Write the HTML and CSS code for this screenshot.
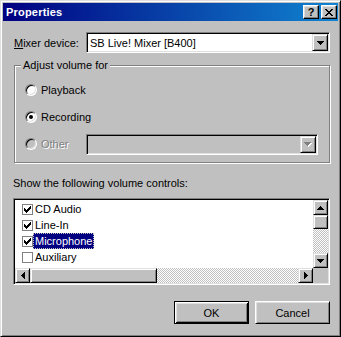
FILE: index.html
```html
<!DOCTYPE html>
<html lang="en">
<head>
    <meta charset="UTF-8">
    <title>Properties</title>
    <link rel="stylesheet" href="styles.css">
</head>
<body>
    <div class="window">
        <div class="titlebar">
            <span class="title">Properties</span>
            <div class="title-buttons">
                <button class="tbtn help">?</button>
                <button class="tbtn close">
                    <svg width="8" height="7" viewBox="0 0 8 7" shape-rendering="crispEdges"><path d="M0 0h2v1h1v1h2V1h1V0h2v1H7v1H6v1H5v1h1v1h1v1h1v1H6V6H5V5H3v1H2v1H0V6h1V5h1V4h1V3H2V2H1V1H0z" fill="#000"/></svg>
                </button>
            </div>
        </div>

        <div class="content">
            <div class="mixer-row">
                <label class="mixer-label"><u>M</u>ixer device:</label>
                <div class="combo mixer-combo">
                    <span class="combo-text">SB Live! Mixer [B400]</span>
                    <span class="combo-btn">
                        <svg width="7" height="4" viewBox="0 0 7 4" shape-rendering="crispEdges"><path d="M0 0h7v1H6v1H5v1H4v1H3V3H2V2H1V1H0z" fill="#000"/></svg>
                    </span>
                </div>
            </div>

            <div class="group">
                <span class="legend">Adjust volume for</span>
                <div class="radio-row">
                    <span class="radio"></span>
                    <span class="radio-label">Playback</span>
                </div>
                <div class="radio-row">
                    <span class="radio selected"></span>
                    <span class="radio-label">Recording</span>
                </div>
                <div class="radio-row disabled">
                    <span class="radio"></span>
                    <span class="radio-label">Other</span>
                    <div class="combo other-combo">
                        <span class="combo-text"></span>
                        <span class="combo-btn">
                            <svg width="8" height="5" viewBox="0 0 8 5" shape-rendering="crispEdges"><path d="M1 1h7v1H7v1H6v1H5v1H4V4H3V3H2V2H1z" fill="#fff"/><path d="M0 0h7v1H6v1H5v1H4v1H3V3H2V2H1V1H0z" fill="#808080"/></svg>
                        </span>
                    </div>
                </div>
            </div>

            <p class="list-caption">Show the following volume controls:</p>

            <div class="listbox">
                <div class="items">
                    <div class="item">
                        <span class="check"><svg width="7" height="7" viewBox="0 0 7 7" shape-rendering="crispEdges"><path d="M0 2h1v3H0zM1 3h1v3H1zM2 4h1v3H2zM3 3h1v3H3zM4 2h1v3H4zM5 1h1v3H5zM6 0h1v3H6z" fill="#000"/></svg></span>
                        <span class="item-text">CD Audio</span>
                    </div>
                    <div class="item">
                        <span class="check"><svg width="7" height="7" viewBox="0 0 7 7" shape-rendering="crispEdges"><path d="M0 2h1v3H0zM1 3h1v3H1zM2 4h1v3H2zM3 3h1v3H3zM4 2h1v3H4zM5 1h1v3H5zM6 0h1v3H6z" fill="#000"/></svg></span>
                        <span class="item-text">Line-In</span>
                    </div>
                    <div class="item">
                        <span class="check"><svg width="7" height="7" viewBox="0 0 7 7" shape-rendering="crispEdges"><path d="M0 2h1v3H0zM1 3h1v3H1zM2 4h1v3H2zM3 3h1v3H3zM4 2h1v3H4zM5 1h1v3H5zM6 0h1v3H6z" fill="#000"/></svg></span>
                        <span class="item-text selected">Microphone</span>
                    </div>
                    <div class="item">
                        <span class="check"></span>
                        <span class="item-text">Auxiliary</span>
                    </div>
                </div>

                <div class="vscroll">
                    <span class="sbtn">
                        <svg width="7" height="4" viewBox="0 0 7 4" shape-rendering="crispEdges"><path d="M3 0h1v1h1v1h1v1h1v1H0V3h1V2h1V1h1z" fill="#000"/></svg>
                    </span>
                    <span class="sbtn thumb-v"></span>
                    <span class="track"></span>
                    <span class="sbtn">
                        <svg width="7" height="4" viewBox="0 0 7 4" shape-rendering="crispEdges"><path d="M0 0h7v1H6v1H5v1H4v1H3V3H2V2H1V1H0z" fill="#000"/></svg>
                    </span>
                </div>

                <div class="hscroll">
                    <span class="sbtn">
                        <svg width="4" height="7" viewBox="0 0 4 7" shape-rendering="crispEdges"><path d="M3 0h1v7H3V6H2V5H1V4H0V3h1V2h1V1h1z" fill="#000"/></svg>
                    </span>
                    <span class="sbtn thumb-h"></span>
                    <span class="track"></span>
                    <span class="sbtn">
                        <svg width="4" height="7" viewBox="0 0 4 7" shape-rendering="crispEdges"><path d="M0 0h1v1h1v1h1v1h1v1H3v1H2v1H1v1H0z" fill="#000"/></svg>
                    </span>
                </div>

                <div class="corner"></div>
            </div>

            <div class="actions">
                <button class="btn default">OK</button>
                <button class="btn">Cancel</button>
            </div>
        </div>
    </div>
</body>
</html>
```

FILE: styles.css
```css
* {
    box-sizing: border-box;
}
body {
    margin: 0;
    background-color: #c0c0c0;
    font-family: 'Liberation Sans', Arial, sans-serif;
    font-size: 11px;
    color: #000;
}
.window {
    width: 341px;
    height: 337px;
    background-color: #c0c0c0;
    border: 1px solid;
    border-color: #dfdfdf #000 #000 #dfdfdf;
    box-shadow: inset 1px 1px #fff, inset -1px -1px #808080;
    padding: 2px;
    display: flex;
    flex-direction: column;
}
.titlebar {
    height: 18px;
    background: linear-gradient(90deg, #000080, #1084d0);
    display: flex;
    align-items: center;
    justify-content: space-between;
    padding: 0 1px 0 3px;
}
.title {
    color: #fff;
    font-weight: bold;
    font-size: 11px;
    letter-spacing: 0.2px;
}
.title-buttons {
    display: flex;
    gap: 2px;
}
.tbtn {
    width: 16px;
    height: 14px;
    padding: 0;
    margin: 0;
    background-color: #c0c0c0;
    border: 1px solid;
    border-color: #fff #000 #000 #fff;
    box-shadow: inset -1px -1px #808080, inset 1px 1px #dfdfdf;
    display: flex;
    align-items: center;
    justify-content: center;
    font-family: 'Liberation Sans', Arial, sans-serif;
    font-weight: bold;
    font-size: 11px;
    line-height: 12px;
    color: #000;
}
.content {
    flex: 1;
    padding: 11px 8px 0 10px;
    display: flex;
    flex-direction: column;
}
.mixer-row {
    display: flex;
    align-items: center;
    height: 21px;
}
.mixer-label {
    margin-left: 1px;
}
.combo {
    height: 21px;
    background-color: #fff;
    border: 1px solid;
    border-color: #808080 #fff #fff #808080;
    box-shadow: inset 1px 1px #000, inset -1px -1px #dfdfdf;
    padding: 1px;
    display: flex;
    align-items: stretch;
}
.mixer-combo {
    width: 244px;
    margin-left: auto;
}
.combo-text {
    flex: 1;
    padding-left: 2px;
    display: flex;
    align-items: center;
}
.combo-btn,
.sbtn {
    width: 16px;
    background-color: #c0c0c0;
    border: 1px solid;
    border-color: #dfdfdf #000 #000 #dfdfdf;
    box-shadow: inset 1px 1px #fff, inset -1px -1px #808080;
    display: flex;
    align-items: center;
    justify-content: center;
}
.group {
    position: relative;
    margin: 12px 0 0 1px;
    height: 98px;
    border: 1px solid #808080;
    box-shadow: inset 1px 1px #fff, 1px 1px #fff;
    padding: 14px 11px 0 10px;
    display: flex;
    flex-direction: column;
    gap: 7px;
}
.legend {
    position: absolute;
    top: -7px;
    left: 6px;
    padding: 0 2px;
    line-height: 13px;
    background-color: #c0c0c0;
}
.radio-row {
    height: 20px;
    display: flex;
    align-items: center;
}
.radio {
    position: relative;
    width: 12px;
    height: 12px;
    border-radius: 50%;
    border: 1px solid;
    border-color: #808080 #fff #fff #808080;
    box-shadow: inset 1px 1px #000, inset -1px -1px #dfdfdf;
    background-color: #fff;
}
.radio.selected::after {
    content: "";
    position: absolute;
    left: 3px;
    top: 3px;
    width: 4px;
    height: 4px;
    border-radius: 50%;
    background-color: #000;
}
.radio-label {
    margin-left: 4px;
}
.disabled .radio {
    background-color: #c0c0c0;
}
.disabled .radio-label {
    color: #808080;
    text-shadow: 1px 1px #fff;
}
.other-combo {
    width: 232px;
    margin-left: auto;
    background-color: #c0c0c0;
}
.list-caption {
    margin: 14px 0 0 0;
    line-height: 13px;
}
.listbox {
    margin-top: 8px;
    height: 87px;
    background-color: #fff;
    border: 1px solid;
    border-color: #808080 #fff #fff #808080;
    box-shadow: inset 1px 1px #000, inset -1px -1px #dfdfdf;
    padding: 1px;
    display: grid;
    grid-template-columns: 1fr 15px;
    grid-template-rows: 1fr 15px;
}
.items {
    padding-top: 1px;
    overflow: hidden;
}
.item {
    height: 16px;
    display: flex;
    align-items: center;
    padding-left: 7px;
}
.check {
    width: 11px;
    height: 11px;
    border: 1px solid #808080;
    background-color: #fff;
    display: flex;
    align-items: center;
    justify-content: center;
}
.item-text {
    height: 16px;
    line-height: 16px;
    padding: 0 2px;
}
.item-text.selected {
    background-color: #000080;
    color: #fff;
    outline: 1px dotted #c0c0c0;
    outline-offset: -1px;
}
.vscroll {
    display: flex;
    flex-direction: column;
}
.vscroll .sbtn {
    width: 15px;
    height: 15px;
}
.vscroll .thumb-v {
    height: 14px;
}
.hscroll {
    display: flex;
}
.hscroll .sbtn {
    width: 15px;
    height: 15px;
}
.hscroll .thumb-h {
    width: 127px;
}
.track {
    flex: 1;
    background: repeating-conic-gradient(#c0c0c0 0 25%, #fff 0 50%) 0 0 / 2px 2px;
}
.corner {
    background-color: #c0c0c0;
}
.actions {
    margin-top: 16px;
    display: flex;
    justify-content: flex-end;
    gap: 6px;
}
.btn {
    width: 75px;
    height: 23px;
    padding: 0;
    margin: 0;
    background-color: #c0c0c0;
    font-family: 'Liberation Sans', Arial, sans-serif;
    font-size: 11px;
    color: #000;
    border: 1px solid;
    border-color: #fff #000 #000 #fff;
    box-shadow: inset 1px 1px #dfdfdf, inset -1px -1px #808080;
}
.btn.default {
    border-color: #000;
    box-shadow: inset 1px 1px #fff, inset -1px -1px #000, inset 2px 2px #dfdfdf, inset -2px -2px #808080;
}
```
